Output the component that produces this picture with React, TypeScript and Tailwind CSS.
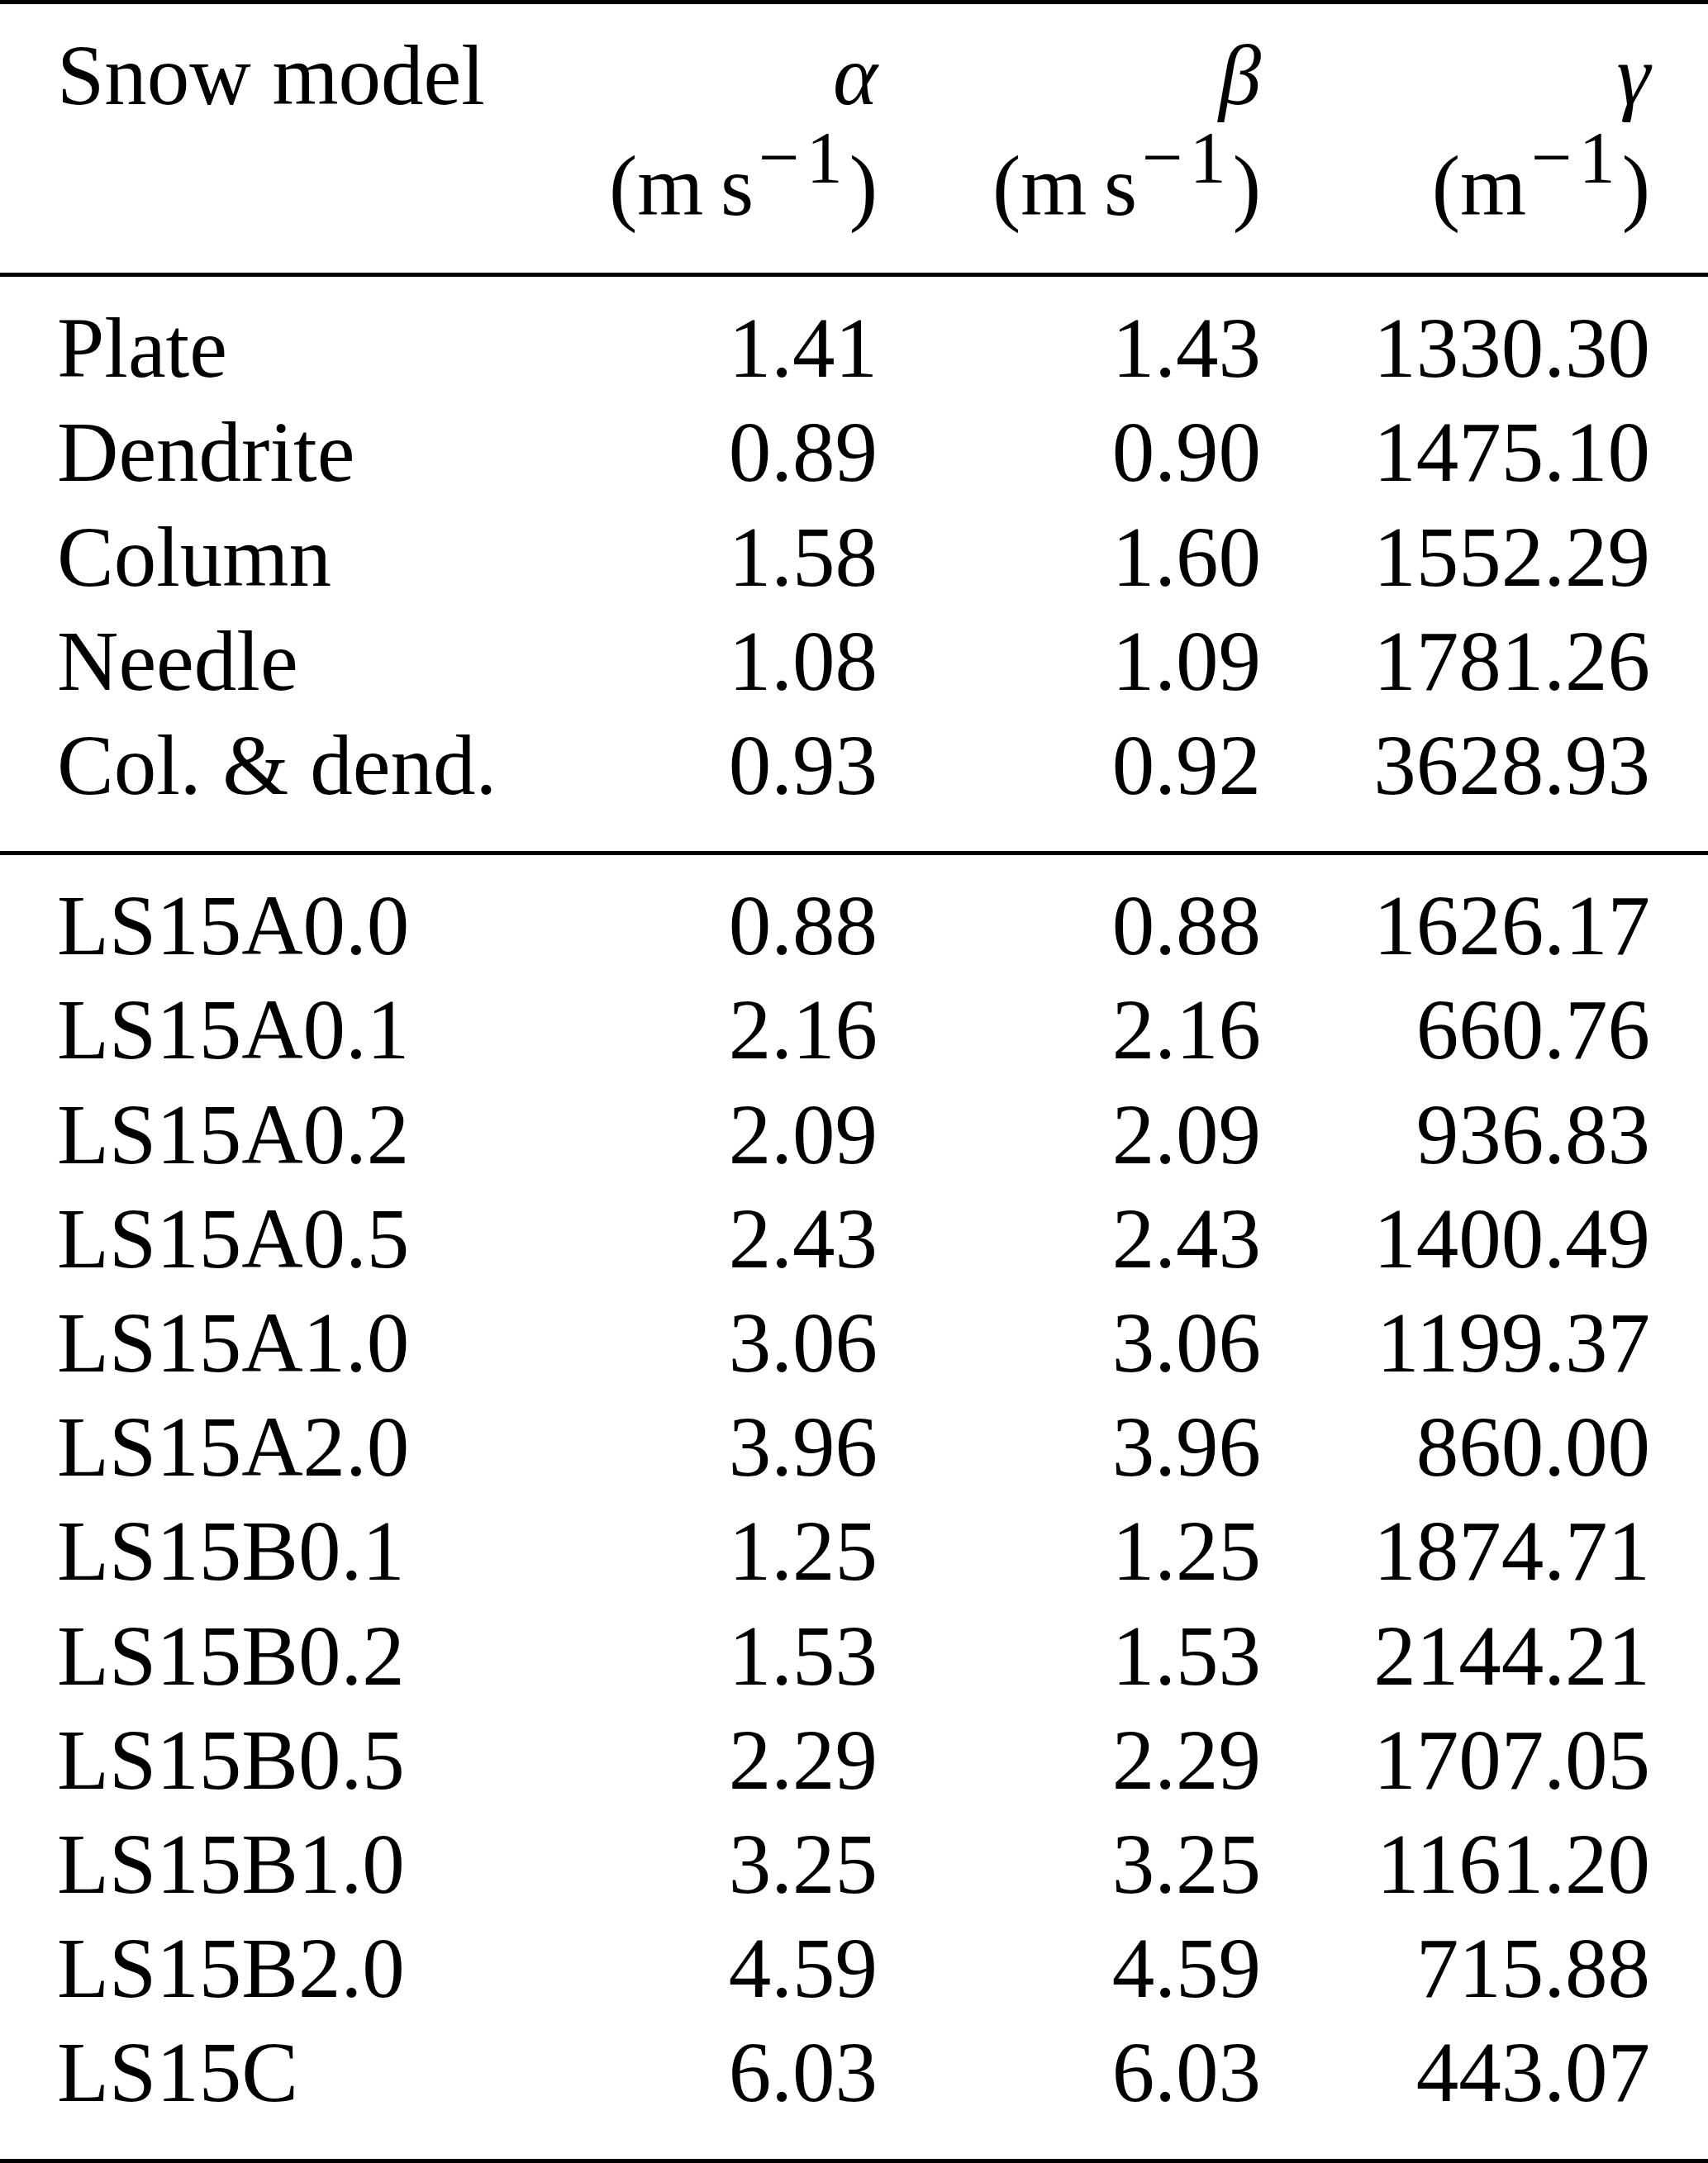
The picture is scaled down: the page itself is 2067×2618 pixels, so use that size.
import React from "react";

const cols = "grid grid-cols-[593px_400px_464px_471px]";

const shapes = [
  ["Plate", "1.41", "1.43", "1330.30"],
  ["Dendrite", "0.89", "0.90", "1475.10"],
  ["Column", "1.58", "1.60", "1552.29"],
  ["Needle", "1.08", "1.09", "1781.26"],
  ["Col. & dend.", "0.93", "0.92", "3628.93"],
];

const ls15 = [
  ["LS15A0.0", "0.88", "0.88", "1626.17"],
  ["LS15A0.1", "2.16", "2.16", "660.76"],
  ["LS15A0.2", "2.09", "2.09", "936.83"],
  ["LS15A0.5", "2.43", "2.43", "1400.49"],
  ["LS15A1.0", "3.06", "3.06", "1199.37"],
  ["LS15A2.0", "3.96", "3.96", "860.00"],
  ["LS15B0.1", "1.25", "1.25", "1874.71"],
  ["LS15B0.2", "1.53", "1.53", "2144.21"],
  ["LS15B0.5", "2.29", "2.29", "1707.05"],
  ["LS15B1.0", "3.25", "3.25", "1161.20"],
  ["LS15B2.0", "4.59", "4.59", "715.88"],
  ["LS15C", "6.03", "6.03", "443.07"],
];

function Rule() {
  return <div className="h-[4.5px] w-full bg-black" />;
}

// (m s^-1) with the superscript drawn a bit larger, like the typeset original
function Unit({ s }: { s: boolean }) {
  return (
    <span>
      (m{s ? "\u2009s" : ""}
      <span className="relative -top-[40px] ml-[6px] mr-[8px] text-[88px] leading-none">
        <span className="mr-[8px]">{"\u2212"}</span>1
      </span>
      )
    </span>
  );
}

function Row({ cells }: { cells: string[] }) {
  return (
    <div className={cols}>
      <div>{cells[0]}</div>
      <div className="text-right">{cells[1]}</div>
      <div className="text-right">{cells[2]}</div>
      <div className="text-right">{cells[3]}</div>
    </div>
  );
}

export default function App() {
  return (
    <div className="w-[2067px] bg-white text-black font-['Liberation_Serif',serif] text-[103px] leading-[126.2px]">
      <Rule />
      <div className="pl-[69px] pr-[70px] pt-[23.5px] pb-[41.9px]">
        <div className={cols}>
          <div>Snow model</div>
          <div className="text-right italic">α</div>
          <div className="text-right italic">β</div>
          <div className="text-right italic">γ</div>
        </div>
        <div className={`${cols} mt-[8px]`}>
          <div />
          <div className="text-right">
            <Unit s={true} />
          </div>
          <div className="text-right">
            <Unit s={true} />
          </div>
          <div className="text-right">
            <Unit s={false} />
          </div>
        </div>
      </div>
      <Rule />
      <div className="pl-[69px] pr-[70px] pt-[23.3px] pb-[40.9px]">
        {shapes.map((r) => (
          <Row key={r[0]} cells={r} />
        ))}
      </div>
      <Rule />
      <div className="pl-[69px] pr-[70px] pt-[22.6px] pb-[41.5px]">
        {ls15.map((r) => (
          <Row key={r[0]} cells={r} />
        ))}
      </div>
      <Rule />
    </div>
  );
}
